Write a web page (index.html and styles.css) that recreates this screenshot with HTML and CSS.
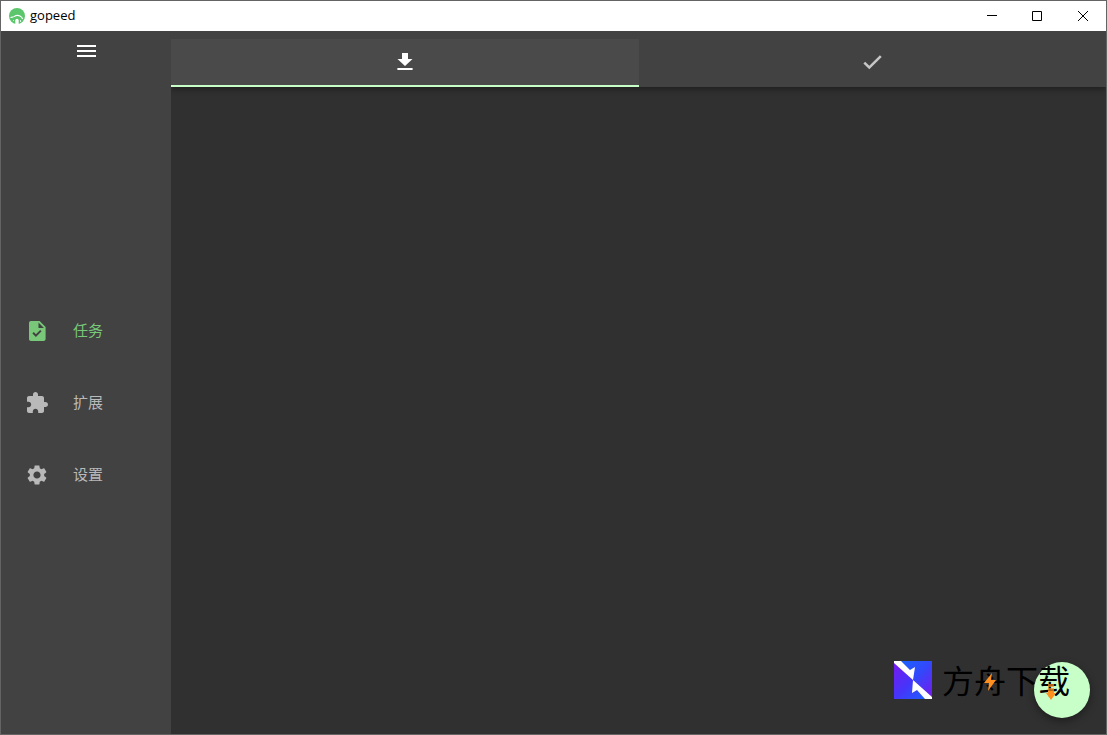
FILE: index.html
```html
<!DOCTYPE html>
<html lang="zh-CN">
<head>
  <meta charset="UTF-8">
  <meta name="viewport" content="width=device-width, initial-scale=1.0">
  <title>gopeed</title>
  <link rel="stylesheet" href="styles.css">
</head>
<body>
  <header class="titlebar">
    <svg class="app-logo" viewBox="0 0 16 16">
      <circle cx="8" cy="8" r="8" fill="#5bc66c"/>
      <path d="M1.5 9.500C3 9 4 9.200 5 8.600 6.500 7.500 9 7 11 8c1.600.8 2.300 1.800 2.600 3" fill="none" stroke="#fff" stroke-width="1.100"/>
      <path d="M6.300 16v-3.500q0-1.800 1.700-1.800t1.700 1.800V16z" fill="#fff"/>
      <path d="M4.500 12v1M11.500 12v2" stroke="#d5f2da" stroke-width="1"/>
    </svg>
    <span class="app-title">gopeed</span>
    <div class="window-controls">
      <button type="button" aria-label="最小化"><svg viewBox="0 0 12 12"><path d="M2 5.500h10"/></svg></button>
      <button type="button" aria-label="最大化"><svg viewBox="0 0 12 12"><path d="M1.500 1.500h9v9h-9z"/></svg></button>
      <button type="button" aria-label="关闭"><svg viewBox="0 0 12 12"><path d="M1 1l10 10M11 1L1 11"/></svg></button>
    </div>
  </header>

  <div class="app">
    <aside class="sidebar">
      <button type="button" class="menu-button" aria-label="菜单">
        <svg class="icon" viewBox="0 0 24 24"><path d="M3 6h19v2H3zM3 11h19v2H3zM3 16h19v2H3z"/></svg>
      </button>
      <nav class="side-nav">
        <a href="#" class="nav-link active">
          <svg class="icon" viewBox="0 0 24 24"><path d="M14 2H6c-1.100 0-1.990.9-1.990 2L4 20c0 1.100.890 2 1.990 2H18.600c1.100 0 2-.9 2-2V8l-6-6zm-3.060 16L7.400 14.460l1.410-1.410 2.120 2.120 4.240-4.240 1.410 1.410L10.940 18zM13.500 9V3.500L19 9z"/></svg>
          <span>任务</span>
        </a>
        <a href="#" class="nav-link">
          <svg class="icon" viewBox="0 0 24 24"><path d="M20.500 11H19V7c0-1.100-.9-2-2-2h-4V3.500C13 2.120 11.880 1 10.500 1S8 2.120 8 3.500V5H4c-1.100 0-1.990.9-1.990 2v3.800H3.500c1.490 0 2.700 1.210 2.700 2.700s-1.210 2.700-2.700 2.700H2V20c0 1.100.9 2 2 2h3.800v-1.500c0-1.490 1.210-2.700 2.700-2.700s2.700 1.210 2.700 2.700V22H17c1.100 0 2-.9 2-2v-4h1.500c1.380 0 2.500-1.120 2.500-2.500S21.880 11 20.500 11z"/></svg>
          <span>扩展</span>
        </a>
        <a href="#" class="nav-link">
          <svg class="icon" viewBox="0 0 24 24"><path d="M19.140 12.940c.04-.3.060-.610.060-.940 0-.320-.020-.640-.070-.940l2.030-1.580c.180-.140.230-.410.120-.610l-1.920-3.320c-.120-.220-.370-.290-.590-.220l-2.390.960c-.5-.380-1.030-.7-1.620-.940l-.360-2.540c-.040-.240-.240-.410-.480-.410h-3.840c-.240 0-.430.170-.470.410l-.360 2.540c-.590.240-1.130.570-1.620.940l-2.390-.960c-.220-.080-.470 0-.590.220L2.740 8.870c-.120.210-.080.470.120.610l2.030 1.580c-.050.3-.090.630-.090.940s.020.640.070.940l-2.030 1.580c-.180.140-.230.410-.120.610l1.920 3.320c.120.220.370.290.590.220l2.390-.960c.5.380 1.030.7 1.620.940l.360 2.540c.050.240.240.410.480.410h3.840c.240 0 .440-.170.470-.410l.360-2.540c.590-.240 1.130-.560 1.620-.940l2.390.960c.220.080.470 0 .590-.220l1.920-3.320c.120-.220.070-.470-.120-.610l-2.010-1.580zM12 15.600c-1.980 0-3.600-1.620-3.600-3.600s1.620-3.600 3.600-3.600 3.600 1.620 3.600 3.600-1.620 3.600-3.600 3.600z"/></svg>
          <span>设置</span>
        </a>
      </nav>
    </aside>

    <main class="content">
      <div class="tabs" role="tablist">
        <button type="button" class="tab active" role="tab" aria-selected="true" aria-label="下载中">
          <svg class="icon" viewBox="0 0 24 24"><path d="M19.500 9H15V3H9v6H4.500l7.500 7 7.500-7zM4.400 18v2h15.200v-2z"/></svg>
        </button>
        <button type="button" class="tab" role="tab" aria-selected="false" aria-label="已完成">
          <svg class="icon" viewBox="0 0 24 24"><path d="M9.300 15.700L5.200 11.700l-1.800 1.800L9.300 19.200 21.700 7l-1.800-1.800z"/></svg>
        </button>
      </div>
    </main>
  </div>

  <button type="button" class="fab" aria-label="添加"></button>

  <div class="brand">
    <svg class="brand-logo" viewBox="0 0 38 38">
      <defs>
        <linearGradient id="left" x1="0" y1="0" x2="1" y2="1">
          <stop offset="0" stop-color="#7a18ee"/>
          <stop offset="0.5" stop-color="#4535fa"/>
          <stop offset="1" stop-color="#1768ff"/>
        </linearGradient>
        <linearGradient id="right" x1="0" y1="0" x2="1" y2="1">
          <stop offset="0" stop-color="#1768ff"/>
          <stop offset="0.5" stop-color="#3348fa"/>
          <stop offset="1" stop-color="#7a18ee"/>
        </linearGradient>
      </defs>
      <path d="M0 0h38v38z" fill="url(#right)"/>
      <path d="M0 0v38h38z" fill="url(#left)"/>
      <path d="M0 0h7l9 9 5-3-2 13L0 2zM19 19l19 17v2h-7l-8-9-5 3z" fill="#fff"/>
    </svg>
    <span class="brand-name">方舟下载</span>
    <svg class="brand-bolt" viewBox="0 0 12 18"><path d="M8 0L0 10h5L4 18l8-11H7z"/></svg>
    <svg class="brand-arrow" viewBox="0 0 10 16"><path d="M2 0h6v3H2zM2 4h6v3H2z" opacity=".7"/><path d="M2 7h6v2h2l-5 7-5-7h2z"/></svg>
  </div>
</body>
</html>
```
FILE: styles.css
```css
* { margin: 0; padding: 0; box-sizing: border-box; }

html, body {
  height: 100%;
  font-family: "Noto Sans CJK SC", sans-serif;
}

body {
  display: flex;
  flex-direction: column;
  position: relative;
  border: 1px solid #646464;
  background: #303030;
  overflow: hidden;
}

button {
  border: none;
  background: none;
  color: inherit;
  cursor: pointer;
}

.icon {
  display: block;
  width: 24px;
  height: 24px;
  fill: currentColor;
}

/* title bar */
.titlebar {
  display: flex;
  align-items: center;
  height: 30px;
  padding-left: 8px;
  background: #fff;
  color: #000;
}

.app-logo {
  width: 16px;
  height: 16px;
  margin-right: 5px;
}

.app-title {
  padding-bottom: 2px;
  font-family: "Open Sans", sans-serif;
  font-size: 13px;
  line-height: 16px;
}

.window-controls {
  display: flex;
  margin-left: auto;
}

.window-controls button {
  display: flex;
  align-items: center;
  justify-content: center;
  width: 46px;
  height: 28px;
}

.window-controls svg {
  width: 12px;
  height: 12px;
  fill: none;
  stroke: #000;
}

.app {
  flex: 1;
  display: flex;
}

/* sidebar */
.sidebar {
  display: flex;
  flex-direction: column;
  width: 170px;
  background: #424242;
  color: #b9b9b9;
}

.menu-button {
  display: flex;
  align-items: center;
  justify-content: center;
  height: 40px;
  color: #fff;
}

.side-nav {
  flex: 1;
  display: flex;
  flex-direction: column;
  justify-content: center;
}

.nav-link {
  display: flex;
  align-items: center;
  gap: 24px;
  height: 72px;
  padding-left: 24px;
  color: inherit;
  font-size: 15px;
  line-height: 20px;
  text-decoration: none;
}

.nav-link span {
  padding-bottom: 2px;
}

.nav-link.active {
  color: #79c879;
}

/* tabs */
.content {
  flex: 1;
}

.tabs {
  display: flex;
  padding-top: 8px;
  background: #424242;
  box-shadow: 0 2px 6px rgba(0, 0, 0, 0.4);
  clip-path: inset(0 0 -12px 0);
}

.tab {
  flex: 1;
  display: flex;
  align-items: center;
  justify-content: center;
  height: 48px;
  border-bottom: 2px solid transparent;
  color: #c6c6c6;
}

.tab.active {
  background: #4a4a4a;
  border-bottom-color: #c8ffc8;
  color: #fff;
}

.fab {
  position: absolute;
  right: 16px;
  bottom: 16px;
  width: 56px;
  height: 56px;
  border-radius: 50%;
  background: #c8ffc8;
  box-shadow: 0 3px 8px rgba(0, 0, 0, 0.4);
}

/* brand mark over the corner */
.brand {
  position: absolute;
  right: 36px;
  bottom: 34px;
  display: flex;
  align-items: center;
  gap: 10px;
  color: #000;
  pointer-events: none;
}

.brand-logo {
  width: 38px;
  height: 38px;
}

.brand-name {
  padding-bottom: 2px;
  font-size: 32px;
  font-weight: 400;
  line-height: 38px;
}

.brand-bolt {
  position: absolute;
  left: 90px;
  top: 13px;
  width: 12px;
  height: 18px;
  fill: #ff9020;
}

.brand-arrow {
  position: absolute;
  right: 14px;
  top: 24px;
  width: 10px;
  height: 16px;
  fill: #ff9020;
}
```
